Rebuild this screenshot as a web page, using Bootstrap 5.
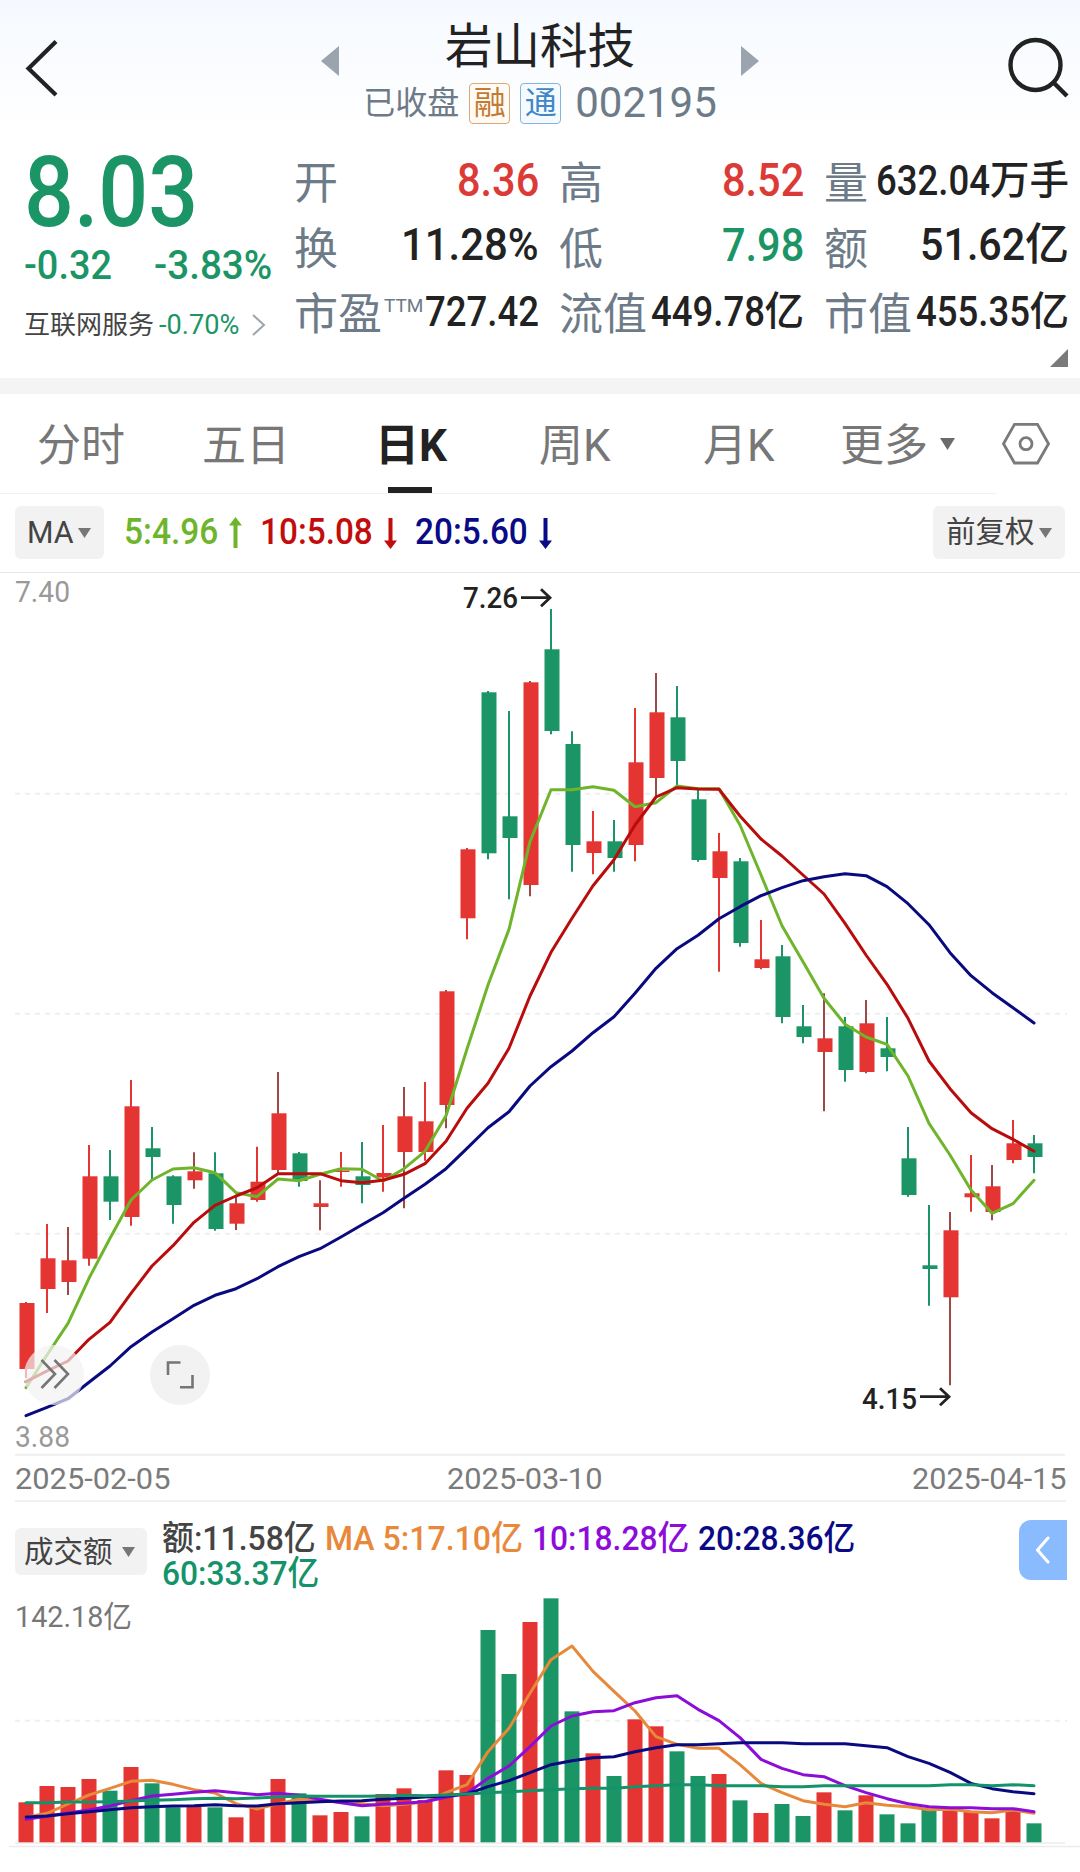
<!DOCTYPE html>
<html lang="zh-CN">
<head>
<meta charset="utf-8">
<meta name="viewport" content="width=device-width, initial-scale=1">
<title>岩山科技 002195</title>
<link href="https://cdn.jsdelivr.net/npm/bootstrap@5.3.0/dist/css/bootstrap.min.css" rel="stylesheet">
<style>
:root{--up:#e53532;--down:#1b9565;--ink:#222;--slate:#6d7a87;--mute:#777}
body{width:1080px;height:1872px;overflow:hidden;background:#fff;color:var(--ink);font-family:Roboto,"Noto Sans CJK SC",sans-serif;line-height:1}
svg{display:block;flex:none}
.fit{display:inline-block;white-space:nowrap;flex:none}
.fit>span{display:inline-block;transform-origin:0 50%}
.t-up{color:#dc3a37}.t-down{color:#1b9565}
.topbar{height:130px;background:linear-gradient(#f5f9ff,#fff);padding:15px 11px 0 25px}
.ic-back{margin-top:24px}
.ic-prev{margin:31px 0 0 262px}
.ic-next{margin-top:31px}
.ic-search{margin-top:22px}
.title-box{width:402px}
.title-name{font-size:47.5px;line-height:64px;height:66px}
.title-sub{height:44px;color:var(--slate);font-size:32px;line-height:44px;gap:10px}
.tagbox{width:41px;height:41px;border:1.5px solid;border-radius:4px;font-size:32px;line-height:38px;text-align:center}
.tag-o{color:#c47a33;border-color:#dba877;background:#fffaf4}
.tag-b{color:#3f87c6;border-color:#86b4dd;background:#f5faff}
.code-no{font-size:42px;line-height:42px;margin-left:4px}
.quote{height:248px;padding:16px 10px 0 24px;position:relative}
.q-left{width:270px}
.q-price{font-size:99px;line-height:92px;font-weight:500;height:93px}
.q-chg{font-size:40px;line-height:53px;font-weight:500;gap:42px;height:53px}
.q-ind{font-size:26px;line-height:66px;height:66px;color:#444}
.q-pct{font-size:27.5px;margin:0 13px 0 5px}
.q-col{width:245px}
.q-col+.q-col{margin-left:20px}
.q-row{height:65.5px;line-height:65.5px}
.q-lab{font-size:44px;color:var(--slate);padding-top:11px;line-height:56px}
.q-lab sup{font-size:19px;top:-.95em;margin-left:2px}
.q-val{font-weight:500;font-size:46px;padding-top:3px}
.q-mid{font-size:44px}.q-sm{font-size:42px}
.c44{font-size:44px}.c39{font-size:39.5px}
.corner{position:absolute;right:12px;bottom:11px}
.band{height:16px;background:#f4f4f4}
.tabs{height:99px;font-size:44px;color:var(--mute);padding-left:37px;position:relative;line-height:104px}
.tabs::after{content:"";position:absolute;left:0;bottom:-1px;width:996px;height:1px;background:#f2f2f2}
.tab-1{width:165px}.tab-2{width:173px}.tab-3{width:164px}.tab-4{width:164px}.tab-5{width:137px}
.tab-on{color:var(--ink);font-weight:700;position:relative}
.tab-on::after{content:"";position:absolute;left:13px;bottom:0;width:44px;height:6px;background:#222}
.ic-more{margin:44px 0 0 12px}
.ic-gear{margin:28px 0 0 47px}
.ma-bar{height:80px;padding:0 15px;border-bottom:1px solid #e6e6e6}
.pill{background:#f2f2f2;border-radius:6px;color:#444;height:53px;font-size:29.5px;line-height:57px}
.pill-ma{width:89px;padding-left:12px}
.pill-ma .fit{font-size:31px;line-height:54px}
.pill-fq{width:132px;padding-left:13px}
.pill-v{width:132px;padding-left:9px;height:47px;line-height:50px;margin-top:26px}
.ic-caret{margin-left:4px}
.pill-v .ic-caret{margin-left:9px}
.ma-val{font-size:36px;font-weight:500;line-height:79px}
.c-5{color:#6eb52c}.c-10{color:#c20d0d}.c-20{color:#0a0a86}
.ic-arr{margin:0 18px 0 11px}
.dates{height:46px;margin:0 14px 0 15px;border-bottom:2px solid #f1f1f1;color:#7b7b7b;font-size:30px;line-height:45px}
.date-mid{margin-right:34px}
.vol-head{height:98px;padding:0 13px 0 15px}
.vol-vals{font-size:34px;font-weight:500;line-height:35px;margin:19px 0 0 15px;width:720px;column-gap:9px}
.drawer-tab{width:48px;height:60px;background:#8abbff;border-radius:12px 0 0 12px;margin-top:18px}
svg text{font-family:Roboto,"Noto Sans CJK SC",sans-serif}
</style>
</head>
<body>
<header class="topbar d-flex align-items-start">
  <svg class="ic-back" width="34" height="60" viewBox="0 0 34 60"><path d="M31 2.500 3.500 29.500 31 56" fill="none" stroke="#222" stroke-width="4.200"/></svg>
  <svg class="ic-prev" width="18" height="30" viewBox="0 0 18 30"><path d="M18 0V30L0 15z" fill="#9aa3ae"/></svg>
  <div class="title-box d-flex flex-column align-items-center">
    <div class="title-name">岩山科技</div>
    <div class="title-sub d-flex align-items-center">
      <span>已收盘</span><span class="tagbox tag-o">融</span><span class="tagbox tag-b">通</span><span class="code-no">002195</span>
    </div>
  </div>
  <svg class="ic-next" width="18" height="30" viewBox="0 0 18 30"><path d="M0 0V30L18 15z" fill="#9aa3ae"/></svg>
  <svg class="ic-search ms-auto" width="62" height="62" viewBox="0 0 62 62"><g fill="none" stroke="#222" stroke-width="4.400"><circle cx="28.500" cy="28" r="25"/><path d="M47 46 60 59"/></g></svg>
</header>

<section class="quote d-flex">
  <div class="q-left t-down">
    <div class="q-price"><span class="fit" data-w="174">8.03</span></div>
    <div class="q-chg d-flex"><span class="fit" data-w="88">-0.32</span><span class="fit" data-w="118">-3.83%</span></div>
    <div class="q-ind d-flex align-items-center"><span>互联网服务</span><span class="fit t-down q-pct" data-w="80">-0.70%</span>
      <svg width="14" height="22" viewBox="0 0 14 22"><path d="M1 1 12 11 1 21" fill="none" stroke="#9aa3ae" stroke-width="2"/></svg></div>
  </div>
  <div class="q-col">
    <div class="q-row d-flex justify-content-between align-items-center"><span class="q-lab">开</span><span class="q-val t-up"><span class="fit" data-w="82">8.36</span></span></div>
    <div class="q-row d-flex justify-content-between align-items-center"><span class="q-lab">换</span><span class="q-val q-mid"><span class="fit" data-w="138">11.28%</span></span></div>
    <div class="q-row d-flex justify-content-between align-items-center"><span class="q-lab">市盈<sup>TTM</sup></span><span class="q-val q-sm"><span class="fit" data-w="114">727.42</span></span></div>
  </div>
  <div class="q-col">
    <div class="q-row d-flex justify-content-between align-items-center"><span class="q-lab">高</span><span class="q-val t-up"><span class="fit" data-w="82">8.52</span></span></div>
    <div class="q-row d-flex justify-content-between align-items-center"><span class="q-lab">低</span><span class="q-val t-down"><span class="fit" data-w="82">7.98</span></span></div>
    <div class="q-row d-flex justify-content-between align-items-center"><span class="q-lab">流值</span><span class="q-val q-sm d-flex"><span class="fit" data-w="114">449.78</span><span class="c39">亿</span></span></div>
  </div>
  <div class="q-col">
    <div class="q-row d-flex justify-content-between align-items-center"><span class="q-lab">量</span><span class="q-val q-sm d-flex"><span class="fit" data-w="114">632.04</span><span class="c39">万手</span></span></div>
    <div class="q-row d-flex justify-content-between align-items-center"><span class="q-lab">额</span><span class="q-val q-mid d-flex"><span class="fit" data-w="105">51.62</span><span class="c44">亿</span></span></div>
    <div class="q-row d-flex justify-content-between align-items-center"><span class="q-lab">市值</span><span class="q-val q-sm d-flex"><span class="fit" data-w="114">455.35</span><span class="c39">亿</span></span></div>
  </div>
  <svg class="corner" width="18" height="18" viewBox="0 0 18 18"><path d="M18 0V18H0z" fill="#7a7a7a"/></svg>
</section>
<div class="band"></div>

<nav class="tabs d-flex">
  <span class="tab-1">分时</span>
  <span class="tab-2">五日</span>
  <span class="tab-on tab-3">日K</span>
  <span class="tab-4">周K</span>
  <span class="tab-5">月K</span>
  <span>更多</span>
  <svg class="ic-more" width="15" height="12" viewBox="0 0 15 12"><path d="M0 0H15L7.500 12z" fill="#6b6b6b"/></svg>
  <svg class="ic-gear" width="48" height="44" viewBox="0 0 48 44"><g fill="none" stroke="#7a7a7a" stroke-width="2.800"><path d="M12.500 2.400H35.500L46.500 21.700 35.500 41H12.500L1.500 21.700z"/><circle cx="24" cy="21.700" r="6"/></g></svg>
</nav>

<div class="ma-bar d-flex align-items-center">
  <div class="pill pill-ma d-flex align-items-center"><span class="fit" data-w="47">MA</span><svg class="ic-caret" width="13" height="10" viewBox="0 0 13 10"><path d="M0 0H13L6.500 10z" fill="#777"/></svg></div>
  <span class="ma-val fit c-5 ms-3 ps-1" data-w="94">5:4.96</span>
  <svg class="ic-arr" width="13" height="32" viewBox="0 0 13 32"><path d="M6.500 0 13 8.500H8.500V31H4.500V8.500H0z" fill="#6eb52c"/></svg>
  <span class="ma-val fit c-10" data-w="113">10:5.08</span>
  <svg class="ic-arr" width="13" height="32" viewBox="0 0 13 32"><path d="M6.500 32 13 23.500H8.500V1H4.500V23.500H0z" fill="#c20d0d"/></svg>
  <span class="ma-val fit c-20" data-w="113">20:5.60</span>
  <svg class="ic-arr" width="13" height="32" viewBox="0 0 13 32"><path d="M6.500 32 13 23.500H8.500V1H4.500V23.500H0z" fill="#0a0a86"/></svg>
  <div class="pill pill-fq d-flex align-items-center ms-auto"><span>前复权</span><svg class="ic-caret" width="13" height="10" viewBox="0 0 13 10"><path d="M0 0H13L6.500 10z" fill="#777"/></svg></div>
</div>

<svg id="kline" width="1080" height="883" viewBox="0 573 1080 883"></svg>

<div class="dates d-flex justify-content-between"><span class="fit" data-w="155">2025-02-05</span><span class="fit date-mid" data-w="155">2025-03-10</span><span class="fit" data-w="154">2025-04-15</span></div>

<div class="vol-head d-flex align-items-start">
  <div class="pill pill-v d-flex align-items-center"><span>成交额</span><svg class="ic-caret" width="13" height="10" viewBox="0 0 13 10"><path d="M0 0H13L6.500 10z" fill="#777"/></svg></div>
  <div class="vol-vals d-flex flex-wrap">
    <span class="fit" data-w="154" style="color:#444">额:11.58亿</span>
    <span class="fit" data-w="198" style="color:#e8883a">MA 5:17.10亿</span>
    <span class="fit" data-w="157" style="color:#8c0cd8">10:18.28亿</span>
    <span class="fit" data-w="157" style="color:#0a0a86">20:28.36亿</span>
    <span class="fit" data-w="157" style="color:#14936a">60:33.37亿</span>
  </div>
  <div class="drawer-tab ms-auto d-flex align-items-center justify-content-center"><svg width="16" height="28" viewBox="0 0 16 28"><path d="M13 2 2.500 14 13 26" fill="none" stroke="#fff" stroke-width="3" stroke-linecap="round" stroke-linejoin="round"/></svg></div>
</div>
<svg id="volume" width="1080" height="271" viewBox="0 1600 1080 271" overflow="visible"></svg>

<script src="https://cdn.jsdelivr.net/npm/bootstrap@5.3.0/dist/js/bootstrap.bundle.min.js"></script>
<script>
const UP='#e53532', DN='#1b9565', DARK='#9c4a46';
const px=n=>26+21*n;
// candle rows: colour, body top, body bottom, wick top, wick bottom
const K=`r 1303 1369 1302 1378|r 1258.3 1289 1224 1313|d 1260.3 1282 1227 1295|r 1176.3 1258.7 1145 1265.7|g 1176.3 1201.7 1150 1220|r 1106.3 1217 1080 1225.7|g 1148.3 1157 1127 1180|g 1176.3 1205 1175.3 1223.7|d 1171.3 1180.3 1152.3 1188.7|g 1173.3 1229 1152.3 1230.7|d 1203.3 1223.7 1195 1230|r 1181.7 1200 1146.7 1201.7|d 1113.3 1170 1072 1173|g 1153.3 1181 1152 1186.7|d 1203.3 1207 1180.3 1230.3|r 1170.5 1172 1152 1186.7|g 1176.3 1185 1142 1203.3|r 1173 1177.5 1125 1191.7|d 1116.3 1152 1087 1208.3|r 1121.3 1152 1082 1160.7|d 991.3 1105 990 1128.3|r 849.3 918.3 848 939.3|g 692.3 853.3 691 859.3|g 816.3 838 711 899.3|d 682.3 885 681 896.3|g 649.3 731 609 734.3|g 744 845 731.3 871.7|r 841.3 853 811 874.3|g 841.3 858 820 871.7|r 762.3 845 708 861.3|d 712.3 778 673 796.7|g 717.3 761 686 785|g 799.3 860 790 861.7|r 851.3 878 833 971.7|g 861.3 943 858 946.7|r 959.3 968 920 969.3|g 956.3 1017 945 1023.3|g 1026.3 1037 1005 1043.3|d 1038.3 1052 993.3 1111.3|g 1026.3 1070 1017 1081.7|d 1023.3 1072 1000 1073.3|g 1048.3 1057 1017 1071.3|g 1158.3 1195 1127 1196.7|g 1265.3 1269 1205 1305.7|d 1230.3 1297.3 1212 1385.3|r 1193.3 1197.3 1155 1211.7|d 1186.3 1212 1165 1220.3|r 1143.3 1160 1120 1163.3|g 1143.3 1157 1135 1173.3`.split('|').map(s=>s.split(' '));
const MA={
 '#6eb52c':[1387.7,1355,1323.3,1278.3,1238.3,1200,1180,1169,1167.7,1172.7,1192.7,1196.7,1179,1180.7,1174.3,1168.7,1169.3,1181,1168.7,1151.3,1115.7,1049,985,929.3,841.7,789.7,789.7,786.7,790.3,806.7,802.7,786,788.7,788.7,825,875,925.7,961.7,998.3,1024.3,1037,1044.3,1076,1123.3,1155,1190,1213.3,1203.7,1180.3],
 '#b90c0c':[1381.7,1371,1361,1339.3,1322.3,1293.3,1266,1245.7,1222.3,1205.3,1196,1187.7,1173.7,1173.7,1173.7,1180.7,1182.7,1180.3,1174.3,1163.7,1141.3,1108.3,1083.3,1048.3,996,952.3,918.3,885.7,859.7,825,797,787.7,789,789.3,816,839,856,875,894,923.3,955,984.3,1018.3,1061,1088.7,1112.7,1128.7,1139.3,1151.3],
 '#0a0a80':[1415.7,1407.3,1398.7,1382.3,1366,1346.7,1332,1318.7,1305.3,1295.3,1288.7,1278.7,1266.7,1256.7,1248.7,1237,1224.7,1212.7,1198.3,1184.3,1168.7,1148.3,1127.7,1111.7,1086,1066.7,1051,1032.7,1016.7,993.3,968.3,948.7,935.3,918.7,906.7,895.7,887.7,880.7,876.7,873.7,875.7,886.7,903.7,924.7,952.7,975.7,992.7,1007.7,1023]
};
const poly=(a,c,w)=>`<polyline points="${a.map((y,i)=>px(i)+','+y).join(' ')}" fill="none" stroke="${c}" stroke-width="${w}" stroke-linecap="round" stroke-linejoin="round"/>`;
const dash=y=>`<path d="M15 ${y}H1067" stroke="#edf0ee" stroke-width="2" stroke-dasharray="5 5"/>`;
let h=[793.7,1013.7,1233.7].map(dash).join('')+'<path d="M15 1454.700H1065" stroke="#eee" stroke-width="2"/>';
K.forEach(([c,a,b,t,u],i)=>{
  const x=px(i), f=c=='g'?DN:UP, w=c=='g'?DN:c=='d'?DARK:UP;
  h+=`<path d="M${x} ${t}V${u}" stroke="${w}" stroke-width="2"/><rect x="${x-6.5}" y="${a}" width="15" height="${b-a}" fill="${f}"/>`;
});
for(const c in MA) h+=poly(MA[c],c,3);
const arrow=(x,y)=>`<path d="M${x} ${y}h27M${x+20} ${y-8.5}l9 8.500-9 8.500" fill="none" stroke="#222" stroke-width="2.800"/>`;
h+=`<g font-size="30" fill="#999"><text x="15" y="602" textLength="55" lengthAdjust="spacingAndGlyphs">7.40</text><text x="15" y="1447" textLength="55" lengthAdjust="spacingAndGlyphs">3.88</text></g>
<g font-size="29.500" font-weight="500" fill="#222"><text x="463" y="608" textLength="55" lengthAdjust="spacingAndGlyphs">7.26</text><text x="862" y="1409" textLength="55" lengthAdjust="spacingAndGlyphs">4.15</text></g>`
+arrow(521,597.7)+arrow(920,1396.7)
+`<g fill="#f2f2f2"><circle cx="54" cy="1375" r="30" opacity=".7"/><circle cx="180" cy="1375" r="30"/></g>
<g fill="none" stroke="#757575" stroke-width="2.600"><path d="M41.500 1360 55 1374 41.500 1388M54.500 1360 68 1374 54.500 1388M168 1375V1362.500H180.500M192.500 1375V1387.300H180"/></g>`;
document.getElementById('kline').innerHTML=h;

// turnover bars and their averages, in thirds of a pixel below y=1490
const V=[937,888,891,867,902,831,880,952,951,952,982,955,867,910,976,966,979,912,895,930,841,855,420,552,396,325,664,790,858,688,709,784,858,852,931,969,942,978,907,961,916,973,1000,960,963,963,985,963,1000];
const VC='rrrrgrggrgrrrgrrgrrrrrggrggrgrrggrgrggrgrgggrrrrg';
const vy=v=>1490+v/3;
const VM={
 '#e8883a':[982,970,942,915,895,874,871,883,899,909,941,957,941,928,932,937,941,947,943,936,908,884,785,715,610,509,468,544,604,663,740,763,775,775,824,880,908,932,943,950,938,946,950,959,958,965,968,960,970],
 '#8c0cd8':[988,979,969,960,948,932,918,913,907,902,908,914,910,916,928,938,947,943,940,935,922,910,865,828,770,708,678,665,662,638,623,617,658,692,743,808,835,854,860,887,908,926,941,950,953,953,956,956,965],
 '#0a0a80':[981,978,971,965,959,953,950,948,947,944,947,948,941,938,935,933,932,928,925,921,918,912,890,872,848,824,812,803,800,785,773,764,764,761,758,758,758,761,761,761,767,773,800,820,847,880,896,905,911],
 '#14936a':[938,938,936,936,935,933,931,929,926,925,926,924,921,918,919,919,919,918,916,917,915,912,908,905,902,899,896,895,895,890,887,884,884,887,887,887,890,890,887,887,887,887,887,887,884,884,887,884,887]
};
h=dash(1720.7)+'<path d="M15 1843H1065M9 1846.500H1080" stroke="#ececec" stroke-width="1.500"/>';
V.forEach((v,i)=>{h+=`<rect x="${px(i)-7.5}" y="${vy(v)}" width="15" height="${1842.3-vy(v)}" fill="${VC[i]=='g'?DN:UP}"/>`});
for(const c in VM) h+=poly(VM[c].map(vy),c,3);
h+='<text x="15" y="1627" font-size="30" fill="#777" textLength="117" lengthAdjust="spacingAndGlyphs">142.18亿</text>';
document.getElementById('volume').innerHTML=h;

// squeeze figures to the narrow numeral widths
document.querySelectorAll('.fit').forEach(e=>{
  const s=document.createElement('span'); s.textContent=e.textContent; e.textContent=''; e.append(s);
  const w=+e.dataset.w, n=s.offsetWidth, pad=parseFloat(getComputedStyle(e).paddingLeft);
  e.style.width=w+pad+'px'; s.style.transform=`scaleX(${w/n})`;
});
</script>
</body>
</html>
